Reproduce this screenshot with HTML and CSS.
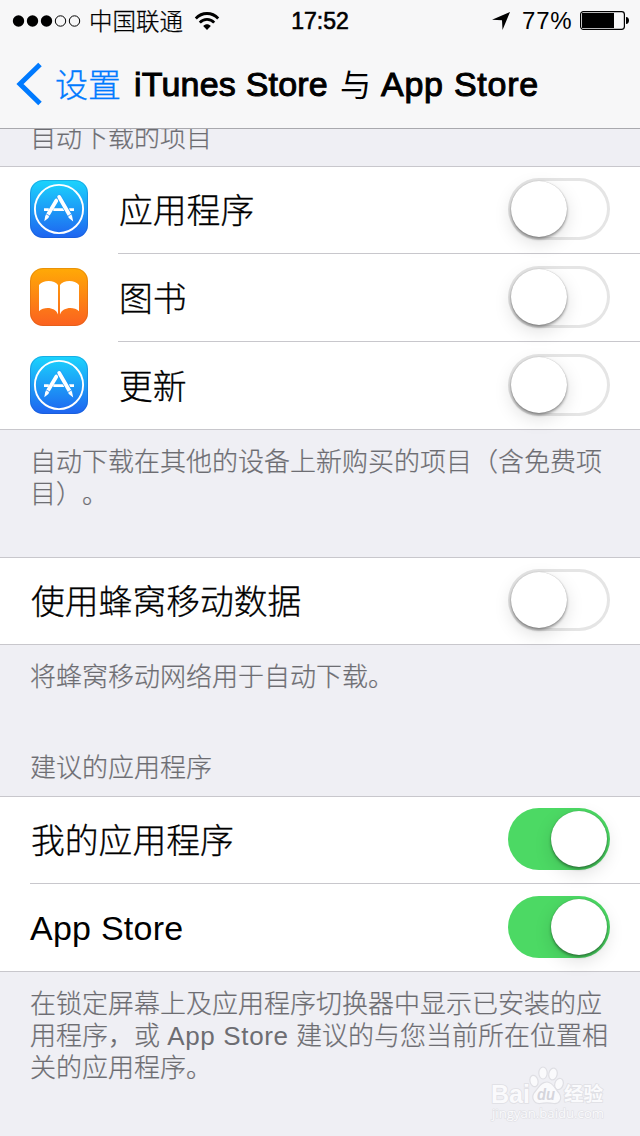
FILE: index.html
```html
<!DOCTYPE html>
<html lang="zh-CN">
<head>
<meta charset="utf-8">
<title>iTunes Store 与 App Store</title>
<link rel="stylesheet" href="styles.css">
</head>
<body>
<svg class="defs" width="0" height="0">
  <defs>
    <linearGradient id="blue" x1="0" y1="0" x2="0" y2="1"><stop offset="0" stop-color="#1bd5fd"/><stop offset="1" stop-color="#1e63f0"/></linearGradient>
    <linearGradient id="orange" x1="0" y1="0" x2="0" y2="1"><stop offset="0" stop-color="#ffaa06"/><stop offset="1" stop-color="#fb6120"/></linearGradient>
    <symbol id="store" viewBox="0 0 58 58">
      <rect width="58" height="58" rx="13" fill="url(#blue)"/>
      <rect x=".5" y=".5" width="57" height="57" rx="12.5" fill="none" stroke="#1557b0" stroke-opacity=".3"/>
      <circle cx="29" cy="29" r="24.1" fill="none" stroke="#fff" stroke-width="1.9"/>
      <path d="M14 29.6H18.800M23.300 29.600H34M39.200 29.600H44" stroke="#fff" stroke-width="2.800"/>
      <path d="M26.400 20.500L17.600 35.300" stroke="#fff" stroke-width="3.800" stroke-linecap="round"/>
      <path d="M28.300 15.500L40.800 37" stroke="#2199f8" stroke-width="5.200"/>
      <path d="M29.200 17L39.700 35.200" stroke="#fff" stroke-width="3.800" stroke-linecap="round"/>
      <path d="M15.300 35.600L19 37.600L14.300 41.300ZM38.200 37.400L41.900 35.300L43.200 41.500Z" fill="#fff"/>
      <path d="M16 33.800L20.300 36.300M37.300 36.500L41.500 34" stroke="#2287f6" stroke-width=".8"/>
    </symbol>
    <symbol id="book" viewBox="0 0 58 58">
      <rect width="58" height="58" rx="13" fill="url(#orange)"/>
      <rect x=".5" y=".5" width="57" height="57" rx="12.5" fill="none" stroke="#b65c10" stroke-opacity=".3"/>
      <path d="M9 17C13 11.700 24.500 11.700 28 17V46.500C25.500 39 14 38.300 9 43.300ZM30 17C33.500 11.700 45 11.700 49 17V43.300C44 38.300 32.500 39 30 46.500Z" fill="#fff"/>
    </symbol>
  </defs>
</svg>
<div class="screen">
  <header class="header">
    <div class="status">
      <div class="status-left">
        <svg width="70" height="14" viewBox="0 0 70 14"><g><circle cx="6.500" cy="7" r="5.700"/><circle cx="20.500" cy="7" r="5.700"/><circle cx="34.500" cy="7" r="5.700"/></g><g fill="none" stroke="#000" stroke-width="1"><circle cx="48.500" cy="7" r="5.200"/><circle cx="62.500" cy="7" r="5.200"/></g></svg>
        <span class="carrier">中国联通</span>
        <svg class="wifi" width="26" height="20" viewBox="0 0 26 20"><g fill="none" stroke="#000" stroke-width="2.800"><path d="M1.800 7.500C8 .8 18 .8 24.200 7.500"/><path d="M5.800 11.600C9.800 7.300 16.200 7.300 20.200 11.600"/></g><path d="M9.200 15C11.400 12.700 14.600 12.700 16.800 15L13 19Z"/></svg>
      </div>
      <div class="clock">17:52</div>
      <div class="status-right">
        <svg width="20" height="20" viewBox="0 0 20 20"><path d="M19 1L11.500 19L11 9.200L1 8.800Z"/></svg>
        <span class="percent">77%</span>
        <svg class="battery" width="50" height="20" viewBox="0 0 50 20"><rect x=".6" y=".6" width="43.800" height="17.800" rx="2.800" fill="none" stroke="#000" stroke-width="1.200"/><rect x="2" y="2" width="32" height="15"/><path d="M46 6C50 6 50 13 46 13Z"/></svg>
      </div>
    </div>
    <nav class="nav">
      <svg width="27" height="44" viewBox="0 0 27 44"><path d="M24 2.500L4 22L24 41.500" fill="none" stroke="#007aff" stroke-width="5"/></svg>
      <span class="back">设置</span>
      <h1 class="title"><span class="strong store-word">iTunes Store</span><span class="and">与</span><span class="strong app-word">App Store</span></h1>
    </nav>
  </header>
  <main>
    <p class="caption first">自动下载的项目</p>
    <section class="list">
      <div class="row"><svg class="icon"><use href="#store"/></svg><div class="cell"><span class="label">应用程序</span><span class="switch"></span></div></div>
      <div class="row"><svg class="icon"><use href="#book"/></svg><div class="cell"><span class="label">图书</span><span class="switch"></span></div></div>
      <div class="row"><svg class="icon"><use href="#store"/></svg><div class="cell"><span class="label">更新</span><span class="switch"></span></div></div>
    </section>
    <p class="note note-a">自动下载在其他的设备上新购买的项目（含免费项<br>目）。</p>
    <section class="list">
      <div class="row"><div class="cell"><span class="label">使用蜂窝移动数据</span><span class="switch"></span></div></div>
    </section>
    <p class="note note-b">将蜂窝移动网络用于自动下载。</p>
    <p class="caption">建议的应用程序</p>
    <section class="list">
      <div class="row"><div class="cell"><span class="label">我的应用程序</span><span class="switch on"></span></div></div>
      <div class="row"><div class="cell"><span class="label latin">App Store</span><span class="switch on"></span></div></div>
    </section>
    <p class="note">在锁定屏幕上及应用程序切换器中显示已安装的应<br>用程序，或 <span class="inline-latin">App Store</span> 建议的与您当前所在位置相<br>关的应用程序。</p>
  </main>
  <svg class="watermark" width="124" height="68" viewBox="0 0 124 68">
    <g fill="#fafafc" stroke="#dfdfe4" stroke-width="1.200">
      <ellipse cx="28" cy="25" rx="4" ry="5.800" transform="rotate(-15 28 25)"/>
      <ellipse cx="37" cy="17" rx="4.200" ry="6"/>
      <ellipse cx="47" cy="18" rx="4.200" ry="6" transform="rotate(12 47 18)"/>
      <ellipse cx="53" cy="28" rx="4.200" ry="5.800" transform="rotate(18 53 28)"/>
      <path d="M41 26C47 26 49 33 53 37C57 43 53 48 48 47.500C43 46.500 39 46.500 34 47.500C28 48 25 42 28 37C32 33 34 26 41 26Z"/>
    </g>
    <g class="mark">
      <text x="-15" y="46.500" font-size="25" textLength="39" lengthAdjust="spacingAndGlyphs">Bai</text>
      <text class="du" x="31" y="44" font-size="16" textLength="18" lengthAdjust="spacingAndGlyphs">du</text>
      <text class="cjk" x="58" y="45" font-size="19.500" textLength="39">经验</text>
      <text class="url" x="-14" y="62" font-size="12.500" textLength="112" lengthAdjust="spacingAndGlyphs">jingyan.baidu.com</text>
    </g>
  </svg>
</div>
</body>
</html>
```
FILE: styles.css
```css
* { box-sizing: border-box; }
body { margin: 0; font-family: "Liberation Sans", "Noto Sans CJK SC", sans-serif; font-weight: 300; color: #000; text-spacing-trim: space-all; }
.defs { position: absolute; }
.screen { position: relative; width: 640px; height: 1136px; overflow: hidden; background: #efeff4; }
.header { position: relative; height: 129px; background: #f7f7f8; border-bottom: 1px solid #a9a9ae; }
.status { display: grid; grid-template-columns: 1fr 64px 1fr; height: 40px; align-items: center; }
.status-left, .status-right { display: flex; align-items: center; height: 40px; }
.status-left { padding-left: 12px; }
.status-right { justify-content: flex-end; padding-right: 10px; }
.carrier { width: 96px; margin-left: 7px; padding-top: 1px; font-size: 23.5px; line-height: 40px; white-space: nowrap; -webkit-text-stroke: .25px; }
.wifi { margin-left: 9px; }
.clock { text-align: center; font-size: 23px; line-height: 42px; -webkit-text-stroke: .6px #000; white-space: nowrap; }
.percent { margin-left: 11px; width: 51px; font-size: 24px; line-height: 42px; letter-spacing: .8px; white-space: nowrap; }
.battery { margin-left: 7px; }
.nav { display: flex; align-items: center; height: 88px; padding-left: 16px; }
.back { margin-left: 12px; width: 67px; padding-top: 4px; font-size: 33px; line-height: 48px; color: #007aff; white-space: nowrap; -webkit-text-stroke: .3px; }
.title { display: flex; align-items: baseline; margin: 0 0 0 12px; padding-top: 2px; font-size: 34px; font-weight: 300; line-height: 48px; white-space: nowrap; }
.strong { -webkit-text-stroke: 1px #000; letter-spacing: .2px; }
.store-word { width: 206px; }
.app-word { letter-spacing: .75px; }
.and { width: 41px; font-size: 31px; font-weight: 400; }
.caption { margin: 0; height: 61px; padding: 15px 30px 0; font-size: 26px; line-height: 36px; color: #6d6d72; -webkit-text-stroke: .2px; }
.first { height: 37px; padding-top: 0; line-height: 18px; }
.list { background: #fff; border-bottom: 1px solid #c8c7cc; box-shadow: inset 0 1px #c8c7cc; }
.row { display: flex; height: 88px; padding-left: 30px; }
.row:last-child { height: 87px; }
.icon { width: 58px; height: 58px; margin: 14px 30px 0 0; }
.cell { flex: 1; display: flex; align-items: center; justify-content: space-between; height: 88px; padding: 0 30px 1px 0; border-bottom: 1px solid #c8c7cc; }
.row:last-child .cell { height: 87px; padding-bottom: 1px; border-bottom: 0; }
.label { padding: 4px 0 0 1px; font-size: 33.8px; line-height: 50px; white-space: nowrap; -webkit-text-stroke: .3px; }
.latin { padding: 2px 0 0; font-size: 34px; letter-spacing: .25px; -webkit-text-stroke: 0; }
.switch { display: flex; width: 102px; height: 62px; padding: 3px; border-radius: 31px; background: #fff; box-shadow: inset 0 0 0 3px #e5e5e5; }
.switch::before { content: ""; width: 56px; height: 56px; border-radius: 50%; background: #fff; box-shadow: 0 2px 3px rgba(0,0,0,.38), 0 6px 18px rgba(0,0,0,.13), 0 0 1px rgba(0,0,0,.25); }
.on { justify-content: flex-end; background: #4cd964; box-shadow: none; padding-right: 3px; }
.note { margin: 0; padding: 16px 0 0 30px; font-size: 26px; line-height: 32px; color: #6d6d72; white-space: nowrap; -webkit-text-stroke: .2px; }
.note-a { height: 127px; }
.note-b { height: 90px; }
.inline-latin { letter-spacing: .65px; -webkit-text-stroke: 0; }
.watermark { position: absolute; left: 506px; top: 1056px; overflow: visible; }
.mark { fill: #fafafc; stroke: #dfdfe4; stroke-width: 1.6px; paint-order: stroke; font-weight: 700; }
.du { fill: #d5d5dc; stroke: none; font-style: italic; }
.cjk { font-family: "Noto Sans CJK SC", sans-serif; }
.url { font-family: "Open Sans", sans-serif; font-weight: 400; stroke-width: 1.2px; }
```
